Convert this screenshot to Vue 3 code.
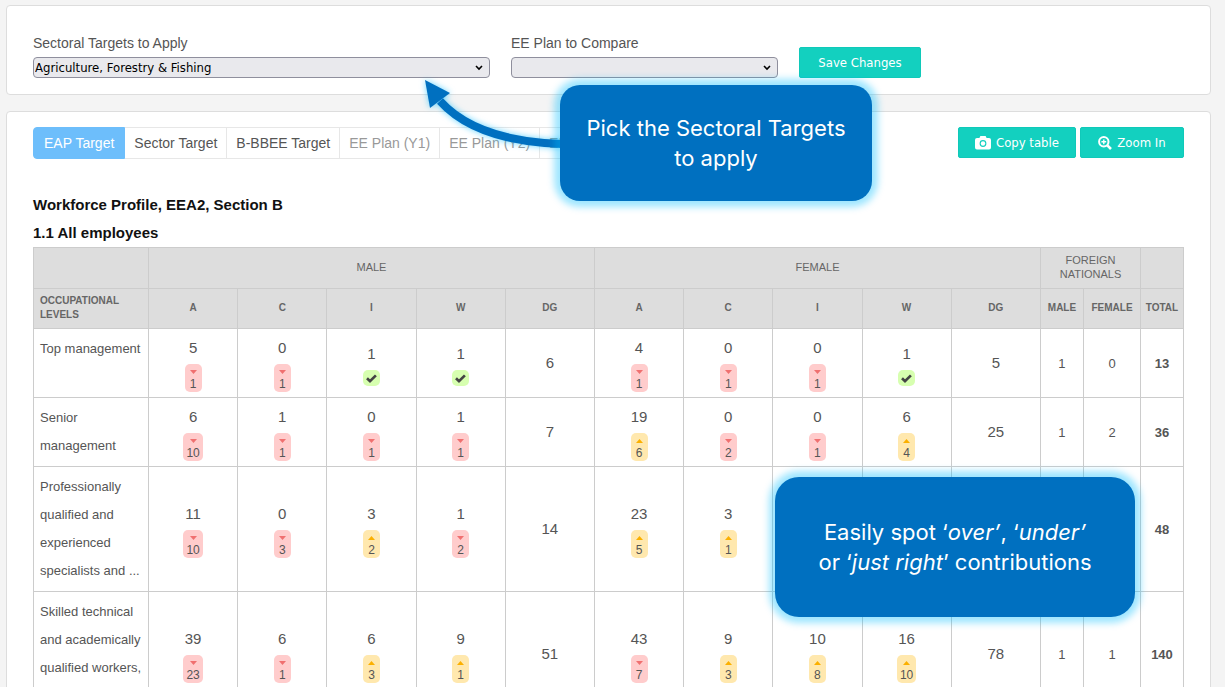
<script setup>
import { ref } from 'vue'

const sector = ref('Agriculture, Forestry & Fishing')
const plan = ref('')
const tabs = [
  { label: 'EAP Target', state: 'active' },
  { label: 'Sector Target', state: '' },
  { label: 'B-BBEE Target', state: '' },
  { label: 'EE Plan (Y1)', state: 'muted' },
  { label: 'EE Plan (Y2)', state: 'muted' },
  { label: 'EE Plan (Y3)', state: 'muted' },
]
const groups = ['A', 'C', 'I', 'W', 'DG', 'A', 'C', 'I', 'W', 'DG']

const down = (value, gap) => ({ value, kind: 'down', gap })
const up = (value, gap) => ({ value, kind: 'up', gap })
const ok = (value) => ({ value, kind: 'ok' })
const sum = (value) => ({ value })

const rows = [
  {
    label: 'Top management',
    cells: [down(5, 1), down(0, 1), ok(1), ok(1), sum(6), down(4, 1), down(0, 1), down(0, 1), ok(1), sum(5)],
    foreign: [1, 0],
    total: 13,
  },
  {
    label: 'Senior management',
    cells: [down(6, 10), down(1, 1), down(0, 1), down(1, 1), sum(7), up(19, 6), down(0, 2), down(0, 1), up(6, 4), sum(25)],
    foreign: [1, 2],
    total: 36,
  },
  {
    label: 'Professionally qualified and experienced specialists and ...',
    tall: true,
    cells: [down(11, 10), down(0, 3), up(3, 2), down(1, 2), sum(14), up(23, 5), up(3, 1), sum(''), sum(''), sum('')],
    foreign: ['', ''],
    total: 48,
  },
  {
    label: 'Skilled technical and academically qualified workers,',
    tall: true,
    cells: [down(39, 23), down(6, 1), up(6, 3), up(9, 1), sum(51), down(43, 7), up(9, 3), up(10, 8), up(16, 10), sum(78)],
    foreign: [1, 1],
    total: 140,
  },
]
</script>

<template>
  <main class="page">
    <form class="panel filters" @submit.prevent>
      <div class="field field-wide">
        <label for="sector">Sectoral Targets to Apply</label>
        <div class="select-wrap">
          <select id="sector" v-model="sector">
            <option>Agriculture, Forestry &amp; Fishing</option>
          </select>
          <svg class="chevron" viewBox="0 0 8 6" aria-hidden="true"><path d="M1 1l3 3 3-3" /></svg>
        </div>
      </div>
      <div class="field field-narrow">
        <label for="plan">EE Plan to Compare</label>
        <div class="select-wrap">
          <select id="plan" v-model="plan">
            <option value=""></option>
          </select>
          <svg class="chevron" viewBox="0 0 8 6" aria-hidden="true"><path d="M1 1l3 3 3-3" /></svg>
        </div>
      </div>
      <button class="btn save" type="submit">Save Changes</button>
    </form>

    <section class="panel report">
      <div class="toolbar">
        <div class="tabs">
          <button v-for="tab in tabs" :key="tab.label" type="button" class="tab" :class="tab.state">{{ tab.label }}</button>
        </div>
        <div class="actions">
          <button class="btn copy" type="button">
            <svg width="16" height="14" viewBox="0 0 16 14" aria-hidden="true">
              <path fill="#fff" fill-rule="evenodd" d="M5.4 0h5.2l1 2H14a2 2 0 0 1 2 2v7.5a2 2 0 0 1-2 2H2a2 2 0 0 1-2-2V4a2 2 0 0 1 2-2h2.4zM8 4.1a3.4 3.4 0 1 0 0 6.8 3.4 3.4 0 0 0 0-6.8z" />
              <circle cx="8" cy="7.5" r="2.2" fill="#fff" />
            </svg>
            Copy table
          </button>
          <button class="btn zoom" type="button">
            <svg width="14" height="14" viewBox="0 0 14 14" fill="none" stroke="#fff" aria-hidden="true">
              <circle cx="5.8" cy="5.8" r="4.7" stroke-width="2" />
              <path d="M9.3 9.3l3.7 3.7" stroke-width="2.6" />
              <path d="M5.8 3.4v4.8M3.4 5.8h4.8" stroke-width="1.4" />
            </svg>
            Zoom In
          </button>
        </div>
      </div>

      <h2>Workforce Profile, EEA2, Section B</h2>
      <h3 id="table-title">1.1 All employees</h3>

      <table aria-labelledby="table-title">
        <colgroup>
          <col class="c-label" />
          <col v-for="n in 10" :key="n" />
          <col class="c-male" /><col class="c-female" /><col class="c-total" />
        </colgroup>
        <thead>
          <tr class="top">
            <th></th>
            <th colspan="5">MALE</th>
            <th colspan="5">FEMALE</th>
            <th colspan="2">FOREIGN NATIONALS</th>
            <th></th>
          </tr>
          <tr>
            <th class="left">OCCUPATIONAL LEVELS</th>
            <th v-for="(g, i) in groups" :key="i">{{ g }}</th>
            <th>MALE</th>
            <th>FEMALE</th>
            <th>TOTAL</th>
          </tr>
        </thead>
        <tbody>
          <tr v-for="row in rows" :key="row.label" :class="{ tall: row.tall }">
            <th class="label" scope="row">{{ row.label }}</th>
            <td v-for="(cell, i) in row.cells" :key="i">
              <div class="cell">
                <span class="value">{{ cell.value }}</span>
                <span v-if="cell.kind === 'ok'" class="badge ok">
                  <svg width="11" height="9" viewBox="0 0 11 9" aria-hidden="true"><path d="M1 4.2l3 2.9L9.9 1.4" fill="none" stroke="#444" stroke-width="2.7" /></svg>
                </span>
                <span v-else-if="cell.kind" class="badge" :class="cell.kind">
                  <svg width="7" height="4" viewBox="0 0 7 4" aria-hidden="true">
                    <path :d="cell.kind === 'down' ? 'M0 0h7L3.5 4z' : 'M0 4h7L3.5 0z'" fill="currentColor" />
                  </svg>
                  <b>{{ cell.gap }}</b>
                </span>
              </div>
            </td>
            <td v-for="(f, i) in row.foreign" :key="'f' + i" class="small">{{ f }}</td>
            <td class="small total">{{ row.total }}</td>
          </tr>
        </tbody>
      </table>
    </section>

    <svg class="arrow" width="160" height="90" viewBox="410 70 160 90" aria-hidden="true">
      <path d="M440 101Q476 141 562 144" fill="none" stroke="#0070c0" stroke-width="8" />
      <path d="M425 80l25 13-20 15z" fill="#0070c0" />
    </svg>
    <aside class="callout pick">Pick the Sectoral Targets<br />to apply</aside>
    <aside class="callout spot">
      <p>Easily spot ‘<em>over’</em>, ‘<em>under’</em><br />or ‘<em>just right</em>’ contributions</p>
    </aside>
  </main>
</template>

<style>
body {
  margin: 0;
  background: #f4f4f4;
}
</style>

<style scoped>
* {
  box-sizing: border-box;
}
.page {
  position: relative;
  height: 100vh;
  overflow: hidden;
  padding: 5px 14px 0 6px;
  display: flex;
  flex-direction: column;
  gap: 16px;
  font-family: "Liberation Sans", Arial, sans-serif;
  color: #555;
}
.panel {
  flex: none;
  background: #fff;
  border: 1px solid #ddd;
  border-radius: 4px;
  padding: 0 26px;
}
.filters {
  display: flex;
  align-items: flex-end;
  gap: 21px;
  padding-top: 29px;
  padding-bottom: 16px;
}
.field {
  display: flex;
  flex-direction: column;
  gap: 6px;
}
.field-wide {
  width: 457px;
}
.field-narrow {
  width: 267px;
}
.field label {
  font-size: 14px;
  line-height: 16px;
}
.select-wrap {
  position: relative;
}
select {
  display: block;
  width: 100%;
  height: 21px;
  padding: 0 20px 0 1px;
  appearance: none;
  border: 1px solid #8f8f9d;
  border-radius: 4px;
  background: #e9e9ed;
  color: #000;
  font: 13px "DejaVu Sans Condensed", "Noto Sans", sans-serif;
}
.chevron {
  position: absolute;
  right: 7px;
  top: 8px;
  width: 8px;
  height: 6px;
  fill: none;
  stroke: #000;
  stroke-width: 1.6;
  pointer-events: none;
}
.btn {
  display: flex;
  align-items: center;
  justify-content: center;
  gap: 5px;
  height: 31px;
  padding: 0;
  border: 1px solid #10c9b9;
  border-radius: 2px;
  background: #13d0bf;
  color: #fff;
  font: 13px "DejaVu Sans Condensed", "Noto Sans", sans-serif;
}
.save {
  width: 122px;
}
.copy {
  width: 118px;
}
.zoom {
  width: 104px;
}
.report {
  padding-top: 15px;
  padding-bottom: 26px;
}
.toolbar {
  display: flex;
  justify-content: space-between;
  align-items: flex-start;
}
.tabs {
  display: flex;
}
.tab {
  height: 32px;
  padding: 0 9px;
  border: 1px solid #e7e7e7;
  border-left-width: 0;
  background: #fff;
  color: #555;
  font: 14px "Liberation Sans", Arial, sans-serif;
}
.tab.active {
  padding: 0 10px;
  border-color: #6dbefb;
  border-left-width: 1px;
  border-radius: 4px 0 0 4px;
  background: #6dbefb;
  color: #fff;
}
.tab.muted {
  color: #999;
}
.actions {
  display: flex;
  gap: 4px;
}
h2,
h3 {
  margin: 0;
  font-size: 15px;
  line-height: 28px;
  font-weight: 700;
  color: #111;
}
h2 {
  margin-top: 32px;
}
table {
  width: 100%;
  table-layout: fixed;
  border-collapse: collapse;
}
.c-label {
  width: 115px;
}
.c-male,
.c-total {
  width: 43px;
}
.c-female {
  width: 57px;
}
th,
td {
  padding: 0;
  border: 1px solid #ccc;
  text-align: center;
  vertical-align: middle;
}
thead th {
  height: 40px;
  padding-bottom: 2px;
  background: #ddd;
  color: #666;
  font-size: 10px;
  line-height: 14px;
}
thead .top th {
  height: 41px;
  font-size: 11px;
  font-weight: 400;
}
thead .left {
  padding-left: 6px;
  text-align: left;
}
tbody tr {
  height: 69px;
}
tbody .tall {
  height: 125px;
}
tbody .label {
  padding: 6px 4px 6px 6px;
  text-align: left;
  vertical-align: top;
  font-size: 13px;
  line-height: 28px;
  font-weight: 400;
}
.cell {
  display: flex;
  flex-direction: column;
  align-items: center;
  gap: 2px;
}
.value {
  font-size: 15px;
  line-height: 28px;
}
.badge {
  display: flex;
  flex-direction: column;
  align-items: center;
  min-width: 17px;
  height: 28px;
  padding: 6px 3px 0;
  border-radius: 5px;
}
.badge b {
  margin-top: 3px;
  font-size: 12px;
  line-height: 14px;
  font-weight: 400;
  color: #555;
}
.badge.down {
  background: #fcc;
  color: #f07070;
}
.badge.up {
  background: #ffe8ae;
  color: #fbb000;
}
.badge.ok {
  justify-content: center;
  height: 16px;
  padding: 0 3px;
  background: #d7ffb0;
}
.small {
  font-size: 13px;
}
.total {
  font-weight: 700;
}
.arrow {
  position: absolute;
  left: 410px;
  top: 70px;
  filter: drop-shadow(0 0 3px rgba(0, 185, 255, 0.6));
}
.callout {
  position: absolute;
  display: flex;
  align-items: center;
  justify-content: center;
  background: #0070c0;
  box-shadow: 0 0 7px 6px rgba(0, 190, 255, 0.38);
  color: #fff;
  font-family: Inter, "Open Sans", sans-serif;
  font-size: 22px;
  line-height: 30px;
  text-align: center;
}
.callout p {
  margin: 0;
}
.pick {
  left: 560px;
  top: 85px;
  width: 312px;
  height: 116px;
  border-radius: 20px;
}
.spot {
  left: 775px;
  top: 477px;
  width: 360px;
  height: 140px;
  border-radius: 24px;
}
</style>
